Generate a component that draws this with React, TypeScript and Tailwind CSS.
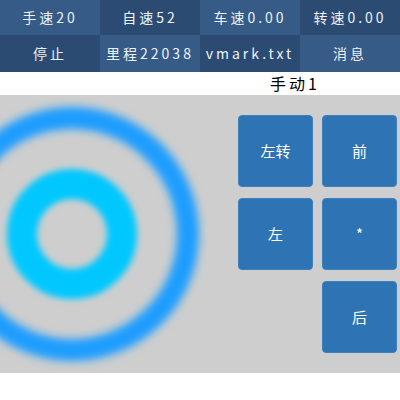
import React from "react";

const cells = [
  { label: "手速20", dark: false },
  { label: "自速52", dark: true },
  { label: "车速0.00", dark: false },
  { label: "转速0.00", dark: true },
  { label: "停止", dark: true },
  { label: "里程22038", dark: false },
  { label: "vmark.txt", dark: true },
  { label: "消息", dark: false },
];

const pad = [
  ["左转", "前"],
  ["左", "*"],
  [null, "后"],
];

export default function App() {
  return (
    <div
      className="w-[400px] h-[400px] bg-white overflow-hidden"
      style={{ fontFamily: '"Noto Sans CJK SC", Roboto, sans-serif' }}
    >
      {/* status header */}
      <div className="grid grid-cols-4 grid-rows-[35px_37px]">
        {cells.map((c, i) => (
          <div
            key={i}
            className={`flex items-center justify-center text-[14px] tracking-[3px] text-[#eef2f8] ${c.dark ? "bg-[#2b4b73]" : "bg-[#355b86]"}`}
          >
            {c.label}
          </div>
        ))}
      </div>

      <div className="h-[23px] flex">
        <div className="w-[270px]" />
        <div className="text-[16px] leading-[23px] tracking-[3px] text-black">手动1</div>
      </div>

      {/* control area */}
      <div className="h-[278px] bg-[#cecece] flex">
        <div className="relative w-[238px] h-full overflow-hidden">
          <svg width="238" height="278" className="absolute left-0 top-0">
            <defs>
              <filter id="blurOuter" x="-50%" y="-50%" width="200%" height="200%">
                <feGaussianBlur stdDeviation="4" />
              </filter>
              <filter id="blurInner" x="-50%" y="-50%" width="200%" height="200%">
                <feGaussianBlur stdDeviation="3" />
              </filter>
            </defs>
            <circle cx="72" cy="139" r="116" fill="none" stroke="#1a9dff" strokeWidth="22" filter="url(#blurOuter)" />
            <circle cx="72" cy="139" r="50" fill="none" stroke="#05c8ff" strokeWidth="30" filter="url(#blurInner)" />
          </svg>
        </div>
        <div className="pt-[20px] flex flex-col gap-[11px]">
          {pad.map((row, r) => (
            <div key={r} className="flex gap-[9px]">
              {row.map((b, k) =>
                b ? (
                  <div
                    key={k}
                    className="w-[75px] h-[72px] rounded-[4px] bg-[#2e74b5] border border-[#3b80c0] flex items-center justify-center text-white text-[15px]"
                  >
                    {b}
                  </div>
                ) : (
                  <div key={k} className="w-[75px] h-[72px]" />
                )
              )}
            </div>
          ))}
        </div>
      </div>
    </div>
  );
}
